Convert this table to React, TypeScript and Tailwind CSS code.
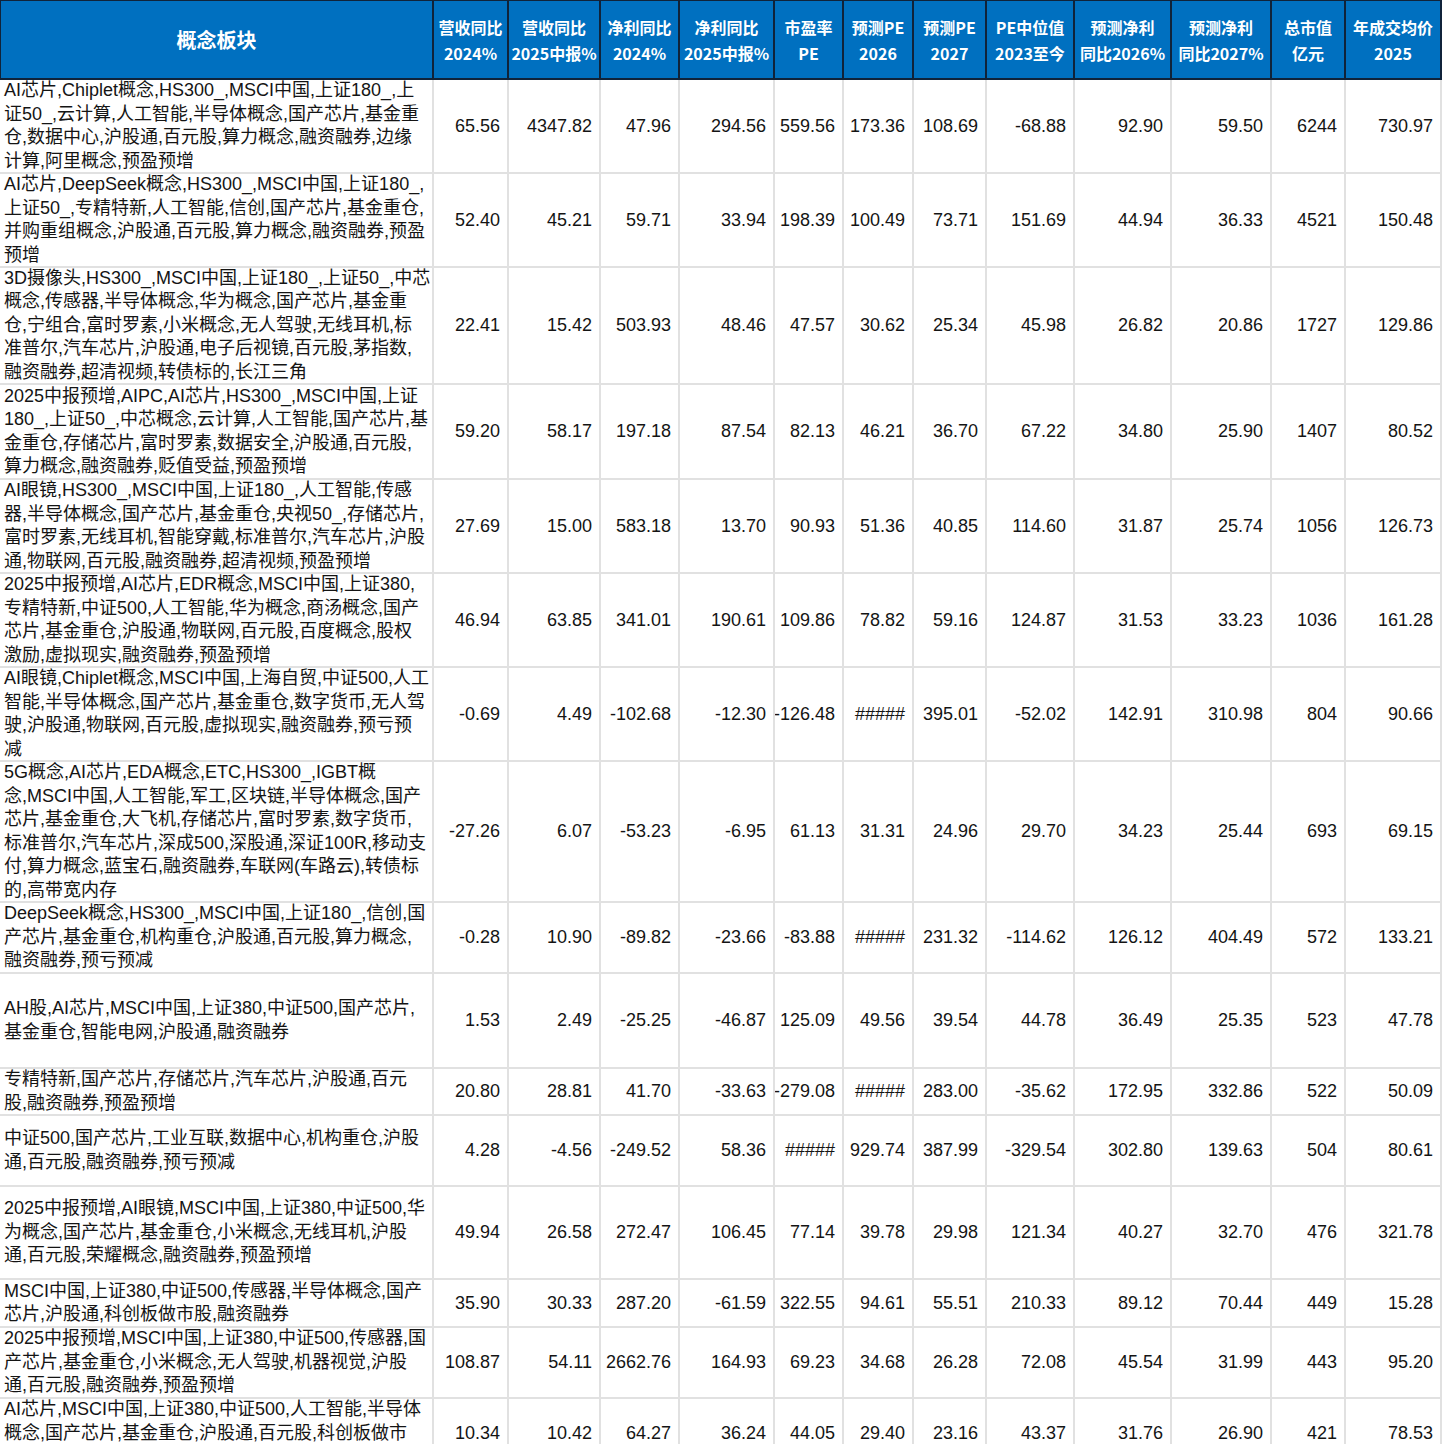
import React from "react";

type Row = {
  h: string;
  lines: string[];
  nums: string[];
};

const headers: string[][] = [
  ["概念板块"],
  ["营收同比", "2024%"],
  ["营收同比", "2025中报%"],
  ["净利同比", "2024%"],
  ["净利同比", "2025中报%"],
  ["市盈率", "PE"],
  ["预测PE", "2026"],
  ["预测PE", "2027"],
  ["PE中位值", "2023至今"],
  ["预测净利", "同比2026%"],
  ["预测净利", "同比2027%"],
  ["总市值", "亿元"],
  ["年成交均价", "2025"],
];

const rows: Row[] = [
  {
    h: "h-[94px]",
    lines: [
      "AI芯片,Chiplet概念,HS300_,MSCI中国,上证180_,上",
      "证50_,云计算,人工智能,半导体概念,国产芯片,基金重",
      "仓,数据中心,沪股通,百元股,算力概念,融资融券,边缘",
      "计算,阿里概念,预盈预增",
    ],
    nums: ["65.56", "4347.82", "47.96", "294.56", "559.56", "173.36", "108.69", "-68.88", "92.90", "59.50", "6244", "730.97"],
  },
  {
    h: "h-[94px]",
    lines: [
      "AI芯片,DeepSeek概念,HS300_,MSCI中国,上证180_,",
      "上证50_,专精特新,人工智能,信创,国产芯片,基金重仓,",
      "并购重组概念,沪股通,百元股,算力概念,融资融券,预盈",
      "预增",
    ],
    nums: ["52.40", "45.21", "59.71", "33.94", "198.39", "100.49", "73.71", "151.69", "44.94", "36.33", "4521", "150.48"],
  },
  {
    h: "h-[117px]",
    lines: [
      "3D摄像头,HS300_,MSCI中国,上证180_,上证50_,中芯",
      "概念,传感器,半导体概念,华为概念,国产芯片,基金重",
      "仓,宁组合,富时罗素,小米概念,无人驾驶,无线耳机,标",
      "准普尔,汽车芯片,沪股通,电子后视镜,百元股,茅指数,",
      "融资融券,超清视频,转债标的,长江三角",
    ],
    nums: ["22.41", "15.42", "503.93", "48.46", "47.57", "30.62", "25.34", "45.98", "26.82", "20.86", "1727", "129.86"],
  },
  {
    h: "h-[95px]",
    lines: [
      "2025中报预增,AIPC,AI芯片,HS300_,MSCI中国,上证",
      "180_,上证50_,中芯概念,云计算,人工智能,国产芯片,基",
      "金重仓,存储芯片,富时罗素,数据安全,沪股通,百元股,",
      "算力概念,融资融券,贬值受益,预盈预增",
    ],
    nums: ["59.20", "58.17", "197.18", "87.54", "82.13", "46.21", "36.70", "67.22", "34.80", "25.90", "1407", "80.52"],
  },
  {
    h: "h-[94px]",
    lines: [
      "AI眼镜,HS300_,MSCI中国,上证180_,人工智能,传感",
      "器,半导体概念,国产芯片,基金重仓,央视50_,存储芯片,",
      "富时罗素,无线耳机,智能穿戴,标准普尔,汽车芯片,沪股",
      "通,物联网,百元股,融资融券,超清视频,预盈预增",
    ],
    nums: ["27.69", "15.00", "583.18", "13.70", "90.93", "51.36", "40.85", "114.60", "31.87", "25.74", "1056", "126.73"],
  },
  {
    h: "h-[94px]",
    lines: [
      "2025中报预增,AI芯片,EDR概念,MSCI中国,上证380,",
      "专精特新,中证500,人工智能,华为概念,商汤概念,国产",
      "芯片,基金重仓,沪股通,物联网,百元股,百度概念,股权",
      "激励,虚拟现实,融资融券,预盈预增",
    ],
    nums: ["46.94", "63.85", "341.01", "190.61", "109.86", "78.82", "59.16", "124.87", "31.53", "33.23", "1036", "161.28"],
  },
  {
    h: "h-[94px]",
    lines: [
      "AI眼镜,Chiplet概念,MSCI中国,上海自贸,中证500,人工",
      "智能,半导体概念,国产芯片,基金重仓,数字货币,无人驾",
      "驶,沪股通,物联网,百元股,虚拟现实,融资融券,预亏预",
      "减",
    ],
    nums: ["-0.69", "4.49", "-102.68", "-12.30", "-126.48", "#####", "395.01", "-52.02", "142.91", "310.98", "804", "90.66"],
  },
  {
    h: "h-[141px]",
    lines: [
      "5G概念,AI芯片,EDA概念,ETC,HS300_,IGBT概",
      "念,MSCI中国,人工智能,军工,区块链,半导体概念,国产",
      "芯片,基金重仓,大飞机,存储芯片,富时罗素,数字货币,",
      "标准普尔,汽车芯片,深成500,深股通,深证100R,移动支",
      "付,算力概念,蓝宝石,融资融券,车联网(车路云),转债标",
      "的,高带宽内存",
    ],
    nums: ["-27.26", "6.07", "-53.23", "-6.95", "61.13", "31.31", "24.96", "29.70", "34.23", "25.44", "693", "69.15"],
  },
  {
    h: "h-[71px]",
    lines: [
      "DeepSeek概念,HS300_,MSCI中国,上证180_,信创,国",
      "产芯片,基金重仓,机构重仓,沪股通,百元股,算力概念,",
      "融资融券,预亏预减",
    ],
    nums: ["-0.28", "10.90", "-89.82", "-23.66", "-83.88", "#####", "231.32", "-114.62", "126.12", "404.49", "572", "133.21"],
  },
  {
    h: "h-[95px]",
    lines: ["AH股,AI芯片,MSCI中国,上证380,中证500,国产芯片,", "基金重仓,智能电网,沪股通,融资融券"],
    nums: ["1.53", "2.49", "-25.25", "-46.87", "125.09", "49.56", "39.54", "44.78", "36.49", "25.35", "523", "47.78"],
  },
  {
    h: "h-[47px]",
    lines: ["专精特新,国产芯片,存储芯片,汽车芯片,沪股通,百元", "股,融资融券,预盈预增"],
    nums: ["20.80", "28.81", "41.70", "-33.63", "-279.08", "#####", "283.00", "-35.62", "172.95", "332.86", "522", "50.09"],
  },
  {
    h: "h-[71px]",
    lines: ["中证500,国产芯片,工业互联,数据中心,机构重仓,沪股", "通,百元股,融资融券,预亏预减"],
    nums: ["4.28", "-4.56", "-249.52", "58.36", "#####", "929.74", "387.99", "-329.54", "302.80", "139.63", "504", "80.61"],
  },
  {
    h: "h-[93px]",
    lines: [
      "2025中报预增,AI眼镜,MSCI中国,上证380,中证500,华",
      "为概念,国产芯片,基金重仓,小米概念,无线耳机,沪股",
      "通,百元股,荣耀概念,融资融券,预盈预增",
    ],
    nums: ["49.94", "26.58", "272.47", "106.45", "77.14", "39.78", "29.98", "121.34", "40.27", "32.70", "476", "321.78"],
  },
  {
    h: "h-[48px]",
    lines: ["MSCI中国,上证380,中证500,传感器,半导体概念,国产", "芯片,沪股通,科创板做市股,融资融券"],
    nums: ["35.90", "30.33", "287.20", "-61.59", "322.55", "94.61", "55.51", "210.33", "89.12", "70.44", "449", "15.28"],
  },
  {
    h: "h-[71px]",
    lines: [
      "2025中报预增,MSCI中国,上证380,中证500,传感器,国",
      "产芯片,基金重仓,小米概念,无人驾驶,机器视觉,沪股",
      "通,百元股,融资融券,预盈预增",
    ],
    nums: ["108.87", "54.11", "2662.76", "164.93", "69.23", "34.68", "26.28", "72.08", "45.54", "31.99", "443", "95.20"],
  },
  {
    h: "h-[71px]",
    lines: [
      "AI芯片,MSCI中国,上证380,中证500,人工智能,半导体",
      "概念,国产芯片,基金重仓,沪股通,百元股,科创板做市",
      "股,融资融券",
    ],
    nums: ["10.34", "10.42", "64.27", "36.24", "44.05", "29.40", "23.16", "43.37", "31.76", "26.90", "421", "78.53"],
  },
];

const cols = "grid grid-cols-[434px_75px_92px_79px_95px_69px_70px_73px_88px_97px_100px_74px_96px]";

export default function App() {
  return (
    <div
      className="w-[1444px] h-[1444px] overflow-hidden bg-white text-[#141414]"
      style={{ fontFamily: '"Liberation Sans", "Noto Sans CJK SC", Arial, sans-serif' }}
    >
      {/* header */}
      <div className={cols}>
        {headers.map((h, i) => (
          <div
            key={i}
            className={
              "h-[80px] bg-[#0070c0] border-t border-r-2 border-b-2 border-[#10233a] flex flex-col items-center justify-center text-center text-white font-bold whitespace-nowrap " +
              (i === 0 ? "border-l text-[20px]" : "text-[16px] leading-[26px]")
            }
            style={{ fontFamily: '"Noto Sans CJK SC", "Noto Sans", sans-serif' }}
          >
            {h.map((t, j) => (
              <span key={j}>{t}</span>
            ))}
          </div>
        ))}
      </div>

      {/* body */}
      {rows.map((r, ri) => (
        <div key={ri} className={cols + " " + r.h}>
          <div className="flex flex-col justify-center pl-1 border-r-2 border-b-2 border-[#e1e1e1] text-[18px] leading-[23.5px] whitespace-nowrap overflow-hidden">
            {r.lines.map((l, li) => (
              <span key={li}>{l}</span>
            ))}
          </div>
          {r.nums.map((n, ni) => (
            <div
              key={ni}
              className="flex items-center justify-end pr-[7px] border-r-2 border-b-2 border-[#e1e1e1] text-[18px] whitespace-nowrap overflow-hidden"
            >
              {n}
            </div>
          ))}
        </div>
      ))}
    </div>
  );
}
